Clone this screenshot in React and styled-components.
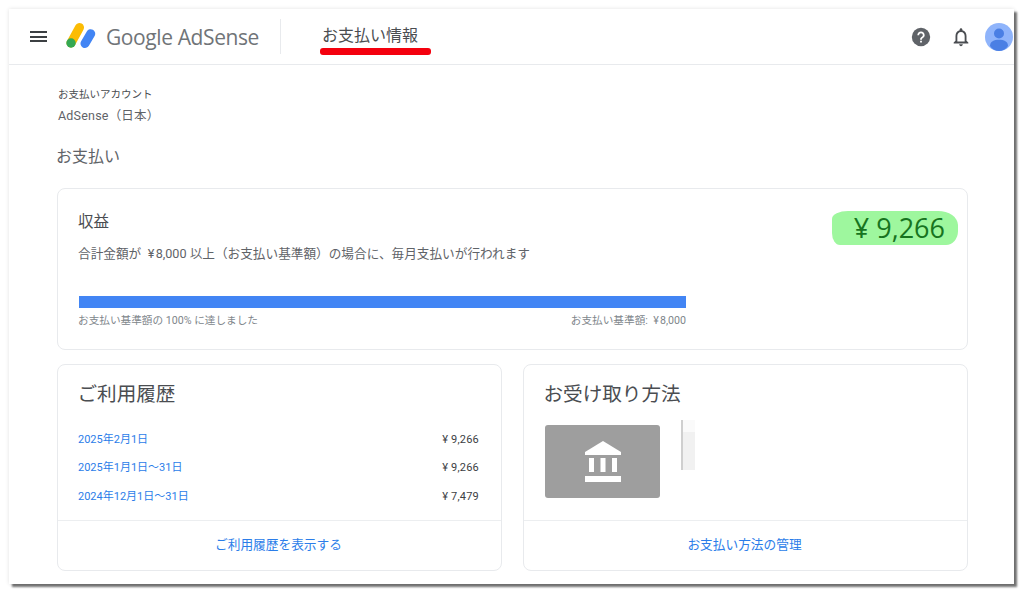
import React from 'react';
import styled, { createGlobalStyle } from 'styled-components';

const Global = createGlobalStyle`
  html, body { margin: 0; padding: 0; background: #fff; }
  body { font-family: Roboto, "Noto Sans CJK JP", sans-serif; color: #5f6368; }
  * { box-sizing: border-box; }
`;

const Page = styled.div`
  width: 1024px;
  height: 594px;
  padding: 9px 10px 10px 9px;
  overflow: hidden;
`;

const Shot = styled.div`
  width: 1005px;
  height: 575px;
  background: #fff;
  box-shadow: 3px 3px 2px rgba(0, 0, 0, 0.55), 0 0 4px rgba(0, 0, 0, 0.12);
`;

const Header = styled.header`
  height: 56px;
  display: flex;
  align-items: center;
  border-bottom: 1px solid #e8eaed;
  padding: 0 1px 0 21px;
`;

const Menu = styled.button`
  width: 17px;
  height: 11px;
  padding: 0;
  border: 0;
  background: none;
  display: flex;
  flex-direction: column;
  justify-content: space-between;
  margin-right: 19px;
  span {
    display: block;
    height: 2px;
    background: #3c4043;
  }
`;

const Brand = styled.div`
  display: flex;
  align-items: center;
  gap: 10px;
  width: 214px;
  white-space: nowrap;
  font-family: "Open Sans", Roboto, sans-serif;
  font-size: 21px;
  letter-spacing: -0.4px;
  color: #707478;
`;

const Divider = styled.div`
  width: 1px;
  height: 35px;
  background: #e8eaed;
  margin-right: 41px;
`;

const Title = styled.h1`
  position: relative;
  margin: 0 0 2px;
  font-size: 16px;
  font-weight: 400;
  color: #4a4d51;
  line-height: 24px;
`;

const RedMark = styled.div`
  position: absolute;
  left: -2px;
  right: -13px;
  bottom: -7px;
  height: 7px;
  border-radius: 3px;
  background: #f4000e;
`;

const HeaderTools = styled.div`
  margin-left: auto;
  display: flex;
  align-items: center;
  gap: 9.5px;
`;

const ToolIcon = styled.div`
  width: 30px;
  height: 30px;
  display: flex;
  align-items: center;
  justify-content: center;
`;

const Content = styled.main`
  padding: 23px 46px 0 48px;
`;

const Account = styled.div`
  padding-left: 1px;
  font-size: 10.5px;
  line-height: 14px;
  color: #4a4d51;
`;

const AccountName = styled.div`
  margin-top: 6px;
  font-size: 12.5px;
  line-height: 16px;
  letter-spacing: 0.2px;
  color: #5f6368;
`;

const Section = styled.h2`
  margin: 23px 0 0 -1px;
  font-size: 16px;
  font-weight: 400;
  line-height: 20px;
  color: #5f6368;
`;

const Card = styled.section`
  position: relative;
  border: 1px solid #e8eaed;
  border-radius: 8px;
  background: #fff;
`;

const Earnings = styled(Card)`
  height: 162px;
  margin-top: 21px;
  padding: 22px 21px 0 20px;
`;

const EarnTitle = styled.div`
  font-size: 15.5px;
  line-height: 22px;
  color: #4a4d51;
`;

const Amount = styled.div`
  position: absolute;
  top: 22px;
  right: 9px;
  width: 126px;
  height: 34px;
  padding-right: 13px;
  border-radius: 16px 20px 12px 8px / 8px 14px 14px 12px;
  background: #9ef79e;
  color: #17741f;
  font-size: 27px;
  line-height: 33px;
  text-align: right;
  font-family: "Open Sans", Roboto, sans-serif;
`;

const Note = styled.p`
  margin: 12px 0 0;
  font-size: 12.65px;
  line-height: 18px;
  color: #5f6368;
`;

const Bar = styled.div`
  width: 607px;
  height: 12px;
  margin: 33px 0 0 1px;
  background: #4285f4;
`;

const BarLabels = styled.div`
  width: 608px;
  display: flex;
  justify-content: space-between;
  margin-top: 5px;
  font-size: 10.65px;
  line-height: 15px;
  color: #80868b;
`;

const Columns = styled.div`
  display: grid;
  grid-template-columns: 445px 445px;
  justify-content: space-between;
  margin-top: 14px;
`;

const LowerCard = styled(Card)`
  height: 207px;
  display: flex;
  flex-direction: column;
`;

const CardBody = styled.div`
  flex: 1;
  padding: 16px 22px 0 20px;
`;

const CardTitle = styled.h3`
  margin: 0 0 0 -0.5px;
  font-size: 19.6px;
  font-weight: 400;
  line-height: 27px;
  color: #4a4d51;
`;

const Rows = styled.div`
  margin-top: 17.5px;
`;

const Row = styled.div`
  height: 28.5px;
  display: flex;
  justify-content: space-between;
  align-items: baseline;
  line-height: 28.5px;
  font-size: 11px;
  color: #3c4043;
  a { color: #2b7de9; }
  span { letter-spacing: 0.2px; }
`;

const CardFoot = styled.div`
  height: 50px;
  padding: 0 2px 5px 0;
  border-top: 1px solid #eceef0;
  display: flex;
  align-items: center;
  justify-content: center;
  font-size: 12.7px;
  color: #2b7de9;
`;

const Method = styled.div`
  display: flex;
  margin: 17px 0 0 1px;
  gap: 21px;
`;

const BankTile = styled.div`
  width: 115px;
  height: 73px;
  border-radius: 3px;
  background: #9e9e9e;
  display: flex;
  align-items: center;
  justify-content: center;
`;

const Blurred = styled.div`
  width: 14px;
  height: 50px;
  margin-top: -5px;
  background: linear-gradient(#fafafa 0 12px, #f1f1f1 12px);
  border-left: 2px solid #cfcfcf;
`;

function Logo() {
  return (
    <svg width="30" height="30" viewBox="0 0 30 30" aria-hidden="true">
      <path d="M5 21 L13.5 5.5" stroke="#fbbc04" strokeWidth="9" strokeLinecap="round" />
      <path d="M19 21.5 L24.7 11.7" stroke="#4285f4" strokeWidth="9" strokeLinecap="round" />
      <circle cx="5" cy="21" r="4.7" fill="#34a853" />
    </svg>
  );
}

function HelpIcon() {
  return (
    <svg width="22" height="22" viewBox="0 0 24 24" fill="#5f6368" aria-hidden="true">
      <circle cx="12" cy="12" r="10" />
      <path fill="#fff" d="M11 18h2v-2h-2v2zm1-12c-2.21 0-4 1.79-4 4h2c0-1.1.9-2 2-2s2 .9 2 2c0 2-3 1.75-3 5h2c0-2.25 3-2.5 3-5 0-2.21-1.79-4-4-4z" />
    </svg>
  );
}

function BellIcon() {
  return (
    <svg width="22" height="22" viewBox="0 0 24 24" fill="#4a4d51" aria-hidden="true">
      <path d="M12 22c1.1 0 2-.9 2-2h-4c0 1.1.9 2 2 2zm6-6v-5c0-3.07-1.63-5.64-4.5-6.32V4c0-.83-.67-1.5-1.5-1.5s-1.5.67-1.5 1.5v.68C7.64 5.36 6 7.92 6 11v5l-2 2v1h16v-1l-2-2zm-2 1H8v-6c0-2.48 1.51-4.5 4-4.5s4 2.02 4 4.5v6z" />
    </svg>
  );
}

function Avatar() {
  return (
    <svg width="28" height="28" viewBox="0 0 28 28" aria-hidden="true">
      <circle cx="14" cy="14" r="14" fill="#8fb4fb" />
      <circle cx="14" cy="10.5" r="5" fill="#4a7fe4" />
      <path d="M5 23 C5 18.5 9 16.8 14 16.8 S23 18.5 23 23 C20.8 26.5 17.5 28 14 28 S7.2 26.5 5 23 Z" fill="#4a7fe4" />
    </svg>
  );
}

function BankIcon() {
  return (
    <svg width="38" height="42" viewBox="0 0 38 42" fill="#fff" aria-hidden="true">
      <path d="M19 0 L37 11 V14 H1 V11 Z" />
      <rect x="5" y="17" width="5" height="14" />
      <rect x="16.5" y="17" width="5" height="14" />
      <rect x="28" y="17" width="5" height="14" />
      <rect x="1" y="35" width="36" height="6" />
    </svg>
  );
}

const history = [
  ['2025年2月1日', '¥ 9,266'],
  ['2025年1月1日～31日', '¥ 9,266'],
  ['2024年12月1日～31日', '¥ 7,479'],
];

export default function App() {
  return (
    <>
      <Global />
      <Page>
        <Shot>
          <Header>
            <Menu aria-label="menu">
              <span />
              <span />
              <span />
            </Menu>
            <Brand>
              <Logo />
              Google AdSense
            </Brand>
            <Divider />
            <Title>
              お支払い情報
              <RedMark />
            </Title>
            <HeaderTools>
              <ToolIcon><HelpIcon /></ToolIcon>
              <ToolIcon><BellIcon /></ToolIcon>
              <Avatar />
            </HeaderTools>
          </Header>
          <Content>
            <Account>
              お支払いアカウント
              <AccountName>AdSense（日本）</AccountName>
            </Account>
            <Section>お支払い</Section>
            <Earnings>
              <EarnTitle>収益</EarnTitle>
              <Amount>¥ 9,266</Amount>
              <Note>合計金額が{'\u2002'}¥{'\u200A'}8,000 以上（お支払い基準額）の場合に、毎月支払いが行われます</Note>
              <Bar />
              <BarLabels>
                <span>お支払い基準額の 100% に達しました</span>
                <span>お支払い基準額:{'\u2002'}¥{'\u200A'}8,000</span>
              </BarLabels>
            </Earnings>
            <Columns>
              <LowerCard>
                <CardBody>
                  <CardTitle>ご利用履歴</CardTitle>
                  <Rows>
                    {history.map(([date, value]) => (
                      <Row key={date}>
                        <a>{date}</a>
                        <span>{value}</span>
                      </Row>
                    ))}
                  </Rows>
                </CardBody>
                <CardFoot>ご利用履歴を表示する</CardFoot>
              </LowerCard>
              <LowerCard>
                <CardBody>
                  <CardTitle>お受け取り方法</CardTitle>
                  <Method>
                    <BankTile><BankIcon /></BankTile>
                    <Blurred />
                  </Method>
                </CardBody>
                <CardFoot>お支払い方法の管理</CardFoot>
              </LowerCard>
            </Columns>
          </Content>
        </Shot>
      </Page>
    </>
  );
}
